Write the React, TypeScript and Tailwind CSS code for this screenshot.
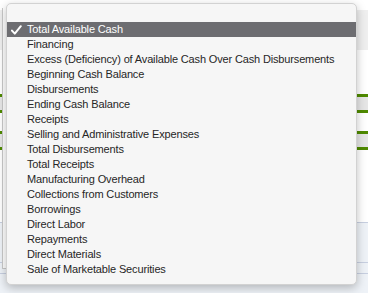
const items = [
  "Total Available Cash",
  "Financing",
  "Excess (Deficiency) of Available Cash Over Cash Disbursements",
  "Beginning Cash Balance",
  "Disbursements",
  "Ending Cash Balance",
  "Receipts",
  "Selling and Administrative Expenses",
  "Total Disbursements",
  "Total Receipts",
  "Manufacturing Overhead",
  "Collections from Customers",
  "Borrowings",
  "Direct Labor",
  "Repayments",
  "Direct Materials",
  "Sale of Marketable Securities",
]

const Check = () => (
  <svg width="11" height="10" viewBox="0 0 11 10" className="shrink-0">
    <path d="M1 5.6 L3.8 8.6 L9.8 1.2" fill="none" stroke="white" strokeWidth="2" strokeLinecap="round" strokeLinejoin="round" />
  </svg>
)

export default function App() {
  return (
    <div className="relative w-[368px] h-[293px] overflow-hidden bg-white font-['Liberation_Sans',Arial,sans-serif]">
      {/* page behind the menu */}
      <div className="flex flex-col h-full">
        <div className="h-[10px]" />
        <div className="h-[40px] bg-[#efefef]" />
        <div className="h-[44px]" />
        <div className="h-[19px] bg-[#e6e6e6] border-y-[3px] border-[#4f8a00]" />
        <div className="h-[18px]" />
        <div className="h-[19px] bg-[#e6e6e6] border-y-[3px] border-[#4f8a00]" />
        <div className="h-[72px]" />
        <div className="flex-1 bg-[#eef2f7] border-t border-[#c7cfe0] flex flex-col">
          <div className="h-[40px] border-b border-[#c7cfe0]" />
          <div className="h-[11px] border-b border-[#c7cfe0]" />
        </div>
      </div>
      <div className="absolute left-[2px] top-[8px] w-[8px] h-[261px] border-l border-b border-[#c9c9c9] bg-white" />

      {/* open select menu */}
      <div className="absolute left-[6px] top-[3px] w-[351px] rounded-[5px] bg-[#f6f6f6] border border-[#d2d2d2] shadow-[0_3px_10px_rgba(0,0,0,0.25)] pt-[3px] pb-[7px]">
        <div className="h-[15px]" />
        {items.map((item, i) => (
          <div
            key={item}
            className={
              i === 0
                ? "flex items-center h-[15px] bg-[#6d6d71] text-white text-[11px] leading-[15px] tracking-[-0.15px]"
                : "flex items-center h-[15px] text-[#262626] text-[11px] leading-[15px] tracking-[-0.15px]"
            }
          >
            <div className="w-[20px] shrink-0 pl-[4px] flex items-center">{i === 0 && <Check />}</div>
            <span className="whitespace-nowrap">{item}</span>
          </div>
        ))}
      </div>
    </div>
  )
}
